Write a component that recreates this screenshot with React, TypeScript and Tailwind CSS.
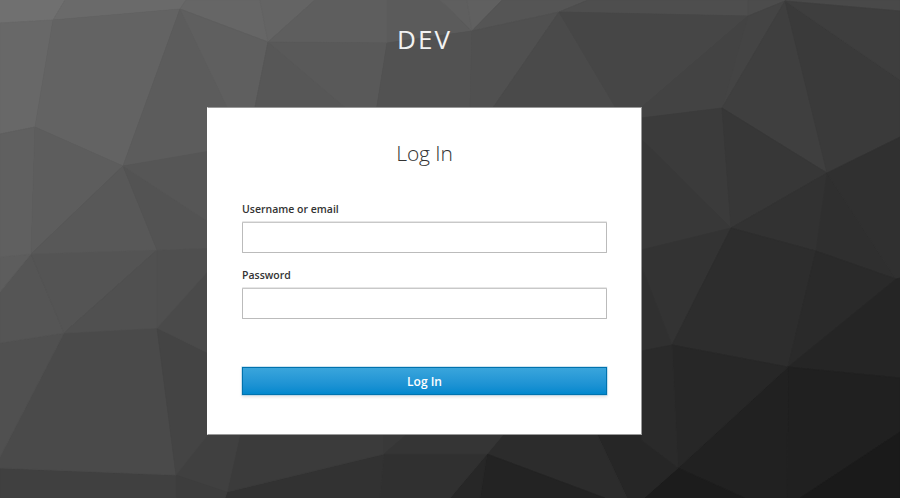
const FACETS: [string, string][] = [
  ["0,0 65,0 53,20 0,23", "#707070"],
  ["65,0 186,0 180,9 53,20", "#6a6a6a"],
  ["0,23 53,20 35,127 0,134", "#686868"],
  ["53,20 180,9 123,166 35,127", "#636363"],
  ["186,0 260,0 268,42 180,9", "#666666"],
  ["260,0 315,0 268,42", "#646464"],
  ["180,9 230,113 240,148 123,166", "#5c5c5c"],
  ["180,9 268,42 254,112 230,113", "#5f5f5f"],
  ["315,0 387,0 387,43 268,42", "#5e5e5e"],
  ["387,0 440,0 472,31 387,43", "#5b5b5b"],
  ["440,0 467,0 472,31", "#5f5f5f"],
  ["467,0 502,0 472,31", "#606060"],
  ["502,0 588,0 559,12 472,31", "#555555"],
  ["588,0 748,0 748,16 559,12", "#4e4e4e"],
  ["748,0 790,0 785,1 748,16", "#4c4c4c"],
  ["785,1 785,0 900,0 900,11", "#494949"],
  ["268,42 348,110 254,112", "#575757"],
  ["268,42 387,43 376,112 348,110", "#595959"],
  ["387,43 472,31 470,110 376,112", "#525252"],
  ["472,31 559,12 490,112 470,110", "#505050"],
  ["559,12 617,110 490,112", "#4a4a4a"],
  ["559,12 748,16 641,108 641,120 617,110", "#464646"],
  ["748,16 722,108 641,118 641,108", "#434343"],
  ["748,16 785,1 722,108", "#444444"],
  ["785,1 827,173 722,108", "#3f3f3f"],
  ["785,1 900,80 900,137 827,173", "#3a3a3a"],
  ["785,1 900,11 900,80", "#3e3e3e"],
  ["641,118 722,108 731,228 641,139", "#3b3b3b"],
  ["641,139 731,228 641,250", "#383838"],
  ["722,108 827,173 731,228", "#373737"],
  ["731,228 827,173 816,251", "#323232"],
  ["827,173 896,279 816,251", "#2f2f2f"],
  ["827,173 900,137 900,279 896,279", "#303030"],
  ["641,250 731,228 672,345 641,265", "#333333"],
  ["641,265 672,345 641,351", "#303030"],
  ["731,228 816,251 788,367 672,345", "#2d2d2d"],
  ["816,251 896,279 788,367", "#2a2a2a"],
  ["896,279 900,278 900,378 788,367", "#252525"],
  ["788,367 900,378 900,432 800,498 787,498", "#202020"],
  ["900,432 900,498 800,498", "#1a1a1a"],
  ["788,367 787,498 745,498 678,468", "#212121"],
  ["672,345 788,367 678,468", "#272727"],
  ["641,351 672,345 678,468 641,440", "#2a2a2a"],
  ["678,468 745,498 644,498", "#1c1c1c"],
  ["641,430 641,440 678,468 644,498 627,498 595,430", "#262626"],
  ["487,454 507,430 595,430 627,498 605,498", "#2c2c2c"],
  ["487,454 605,498 480,498", "#232323"],
  ["487,454 480,498 450,498", "#272727"],
  ["384,454 487,454 450,498 380,498", "#303030"],
  ["227,492 384,454 380,498 225,498", "#323232"],
  ["241,430 384,430 384,454 227,492", "#3b3b3b"],
  ["384,430 412,430 384,454", "#393939"],
  ["412,430 507,430 487,454 384,454", "#353535"],
  ["205,437 210,430 241,430 227,492 176,475", "#404040"],
  ["176,475 227,492 225,498 176,498", "#3d3d3d"],
  ["0,468 176,475 176,498 0,498", "#404040"],
  ["64,333 157,328 176,475 0,468 0,457", "#4a4a4a"],
  ["157,328 210,354 210,432 176,475", "#444444"],
  ["157,328 210,269 210,354", "#4a4a4a"],
  ["0,343 64,333 0,457", "#505050"],
  ["31,254 64,333 0,343 0,292", "#555555"],
  ["0,257 31,254 0,292", "#5d5d5d"],
  ["31,254 157,250 64,333", "#545454"],
  ["157,250 157,328 64,333", "#505050"],
  ["157,250 210,248 210,269 157,328", "#4f4f4f"],
  ["0,134 35,127 31,254 0,257", "#606060"],
  ["35,127 123,166 31,254", "#5d5d5d"],
  ["123,166 157,250 31,254", "#585858"],
  ["123,166 210,223 210,248 157,250", "#535353"],
  ["123,166 210,151 210,223", "#565656"],
];

function Backdrop() {
  return (
    <svg className="absolute inset-0 h-full w-full" viewBox="0 0 900 498" preserveAspectRatio="none" aria-hidden="true">
      {FACETS.map(([points, fill]) => (
        <polygon key={points} points={points} fill={fill} stroke={fill} strokeWidth={0.7} />
      ))}
    </svg>
  );
}

function Field({ id, label, type }: { id: string; label: string; type: string }) {
  return (
    <div className="flex h-[66px] flex-col">
      <label htmlFor={id} className="mb-[5px] text-[10.5px] leading-4 font-semibold text-[#333333]">
        {label}
      </label>
      <input
        id={id}
        type={type}
        className="h-[31px] w-full rounded-[1px] border border-[#bbbbbb] border-t-[#c8c8c8] bg-white px-2 text-sm shadow-[0_-1px_0_#e6e6e6] outline-none"
      />
    </div>
  );
}

export default function App() {
  return (
    <div className="relative h-[498px] w-[900px] overflow-hidden bg-[#444444] font-['Open_Sans',sans-serif]">
      <Backdrop />
      <div className="relative ml-[207px] flex w-[435px] flex-col">
        <header className="flex h-[107px] justify-center pt-[21px] text-[26px] leading-9 font-normal tracking-[2px] text-[#f2f2f2]">
          <span>DEV</span>
        </header>
        <main className="flex h-[328px] flex-col border border-[#999999] border-l-white bg-white px-[34px]">
          <h1 className="mt-[30px] text-center text-[21px] leading-[30px] font-light tracking-[-0.1px] text-[#333333]">
            Log In
          </h1>
          <form className="mt-[33px] flex flex-col" onSubmit={(e) => e.preventDefault()}>
            <Field id="username" label="Username or email" type="text" />
            <Field id="password" label="Password" type="password" />
            <button
              type="submit"
              className="mt-[34px] h-[28px] w-full border border-[#0072ad] bg-linear-to-b from-[#39a5dc] to-[#0088ce] pt-[2px] text-[12px] leading-none font-semibold text-white shadow-[0_0_0_0.5px_#9ccbe6,0_2px_3px_rgba(3,3,3,0.12)]"
            >
              Log In
            </button>
          </form>
        </main>
      </div>
    </div>
  );
}
